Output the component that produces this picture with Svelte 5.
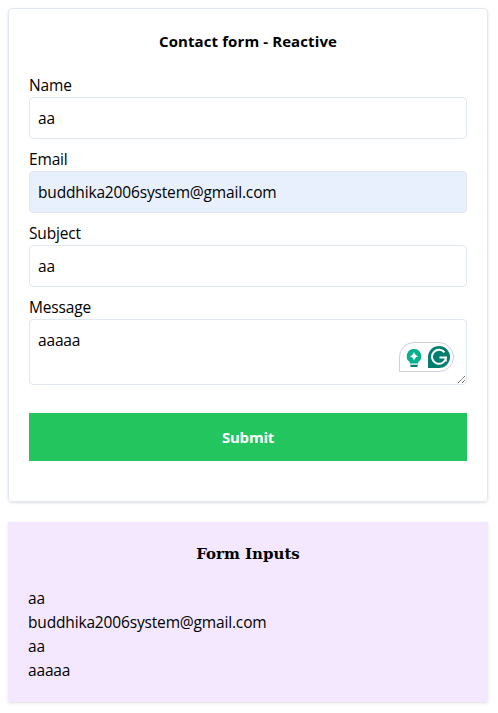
<script>
  let name = $state('aa');
  let email = $state('buddhika2006system@gmail.com');
  let subject = $state('aa');
  let message = $state('aaaaa');
</script>

<main>
  <form class="card" onsubmit={(e) => e.preventDefault()}>
    <h1>Contact form - Reactive</h1>
    <div class="field">
      <label for="name">Name</label>
      <input id="name" type="text" bind:value={name} />
    </div>
    <div class="field">
      <label for="email">Email</label>
      <input id="email" class="filled" type="text" spellcheck="false" bind:value={email} />
    </div>
    <div class="field">
      <label for="subject">Subject</label>
      <input id="subject" type="text" bind:value={subject} />
    </div>
    <div class="field message">
      <label for="message">Message</label>
      <textarea id="message" rows="2" spellcheck="false" bind:value={message}></textarea>
      <svg class="grip" width="9" height="9" viewBox="0 0 9 9" aria-hidden="true">
        <path d="M1 8 8 1M5 8 8 5" stroke="#555" stroke-width="1" stroke-dasharray="1.4 .25" fill="none" />
      </svg>
      <div class="assistant">
        <svg width="56" height="30" viewBox="0 0 56 30" aria-hidden="true">
          <path d="M.5 29.500V15A14.500 14.500 0 0 1 15 .5H40A14.500 14.500 0 0 1 40 29.500Z" fill="#fff" stroke="#cdcede" />
          <path d="M15 7a7.200 7.200 0 0 0-4.200 13.100V21.500h8.400v-1.400A7.200 7.200 0 0 0 15 7Z" fill="#05b08c" />
          <path d="M15 9.700q.9 3.600 4.500 4.500-3.600.9-4.500 4.500-.9-3.600-4.500-4.500 3.600-.9 4.500-4.500Z" fill="#fff" />
          <path d="M11.200 22.800h7.600v.7a1.500 1.500 0 0 1-1.500 1.500h-4.600a1.500 1.500 0 0 1-1.500-1.500Z" fill="#057f6c" />
          <path d="M29 26V15A11 11 0 1 1 40 26Z" fill="#027e6f" />
          <path d="M45.500 10.400A7 7 0 1 0 47 15.500H40.500M46.800 15.500V19.500" fill="none" stroke="#fff" stroke-width="2" />
        </svg>
      </div>
    </div>
    <button type="submit">Submit</button>
  </form>

  <section class="card output">
    <h2>Form Inputs</h2>
    <p>{name}</p>
    <p>{email}</p>
    <p>{subject}</p>
    <p>{message}</p>
  </section>
</main>

<style>
  :global(body) {
    margin: 0;
    background: #fff;
  }
  main {
    box-sizing: border-box;
    width: 496px;
    padding: 8px;
    display: flex;
    flex-direction: column;
    gap: 20px;
    font: 15.5px/24px 'Segoe UI', 'Open Sans', 'Noto Sans', sans-serif;
    letter-spacing: -0.16px;
    color: #000;
  }
  .card {
    box-sizing: border-box;
    width: 480px;
    padding: 20px;
    border: 1px solid #e2e8f0;
    border-radius: 4px;
    box-shadow: 0 1px 3px rgba(0, 0, 0, 0.1), 0 1px 2px -1px rgba(0, 0, 0, 0.1);
  }
  form.card {
    height: 494px;
  }
  h1,
  h2 {
    margin: 0 0 20px;
    line-height: 24px;
    font-weight: 700;
    text-align: center;
  }
  h1 {
    font-size: 15px;
    letter-spacing: 0.1px;
  }
  .field {
    display: flex;
    flex-direction: column;
    margin-bottom: 8px;
  }
  input,
  textarea {
    box-sizing: border-box;
    width: 100%;
    margin: 0;
    padding: 8px;
    border: 1px solid #e2e8f0;
    border-radius: 4px;
    outline: none;
    background: #fff;
    color: inherit;
    font: inherit;
    letter-spacing: inherit;
  }
  input {
    height: 42px;
  }
  .filled {
    background: #e8f0fe;
  }
  textarea {
    height: 66px;
    resize: none;
    overflow: hidden;
  }
  .message {
    position: relative;
    margin-bottom: 28px;
  }
  .grip {
    position: absolute;
    right: 1px;
    bottom: 1px;
  }
  .assistant {
    position: absolute;
    right: 12px;
    bottom: 13px;
    width: 56px;
    height: 30px;
  }
  svg {
    display: block;
  }
  button {
    display: block;
    width: 100%;
    height: 48px;
    padding: 0;
    border: 0;
    background: #22c55e;
    color: #fff;
    font: 700 15px/24px 'Segoe UI', 'Open Sans', 'Noto Sans', sans-serif;
    letter-spacing: -0.2px;
  }
  .output {
    height: 180px;
    border: 0;
    border-radius: 0;
    background: #f3e8ff;
  }
  h2 {
    font-family: 'DejaVu Serif', serif;
    font-size: 15px;
    letter-spacing: 0;
  }
  p {
    margin: 0;
  }
</style>
